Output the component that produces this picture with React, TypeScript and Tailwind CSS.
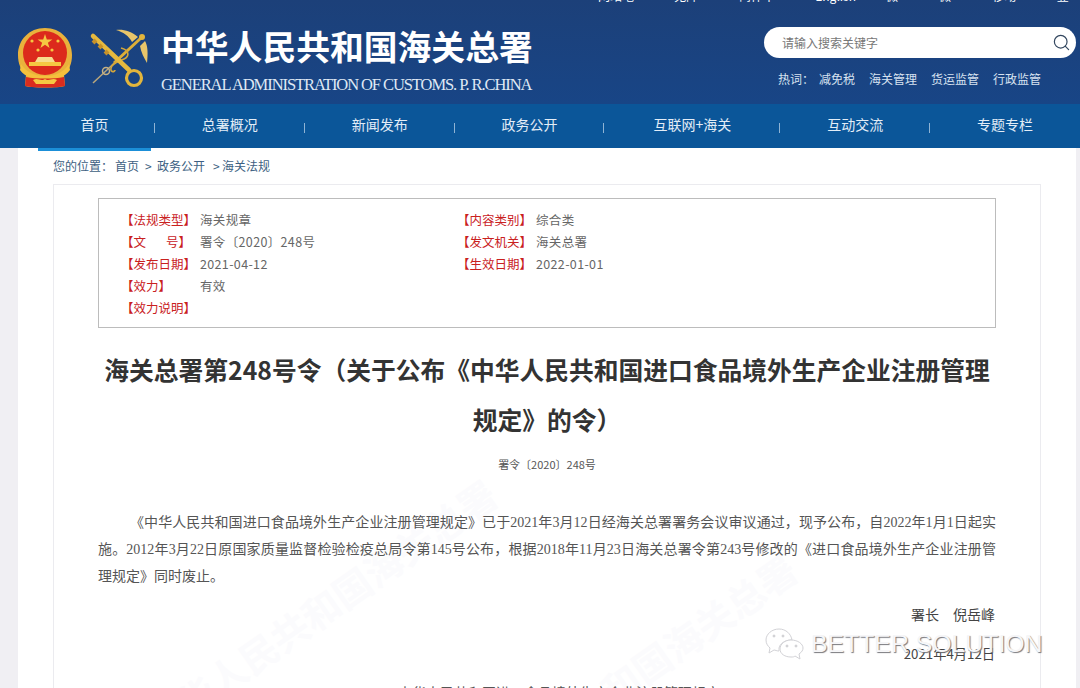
import React from 'react';
import { Search } from 'lucide-react';

const cjk = "font-['Noto_Sans_CJK_SC','Liberation_Sans',sans-serif]";

const navItems = [
  { label: '首页', width: 'w-[117px]', active: true },
  { label: '总署概况', width: 'w-[150px]' },
  { label: '新闻发布', width: 'w-[150px]' },
  { label: '政务公开', width: 'w-[150px]' },
  { label: '互联网+海关', width: 'w-[176px]' },
  { label: '互动交流', width: 'w-[150px]' },
  { label: '专题专栏', width: 'w-[150px]' },
];

const Emblem = () => (
  <svg width="56" height="62" viewBox="0 0 56 62" className="shrink-0">
    <path d="M28 1C12 1 1 13 1 28c0 9 3 15 8 20l-1 11c6 2 34 2 40 0l-1-11c5-5 8-11 8-20C55 13 44 1 28 1z" fill="#e9b23c" />
    <circle cx="28" cy="26" r="22" fill="#dc2a1c" />
    <path d="M28 7l1.8 5.4h5.6l-4.5 3.3 1.7 5.4-4.6-3.3-4.6 3.3 1.7-5.4-4.5-3.3h5.6z" fill="#f5c842" />
    <circle cx="15" cy="14" r="1.6" fill="#f5c842" />
    <circle cx="41" cy="14" r="1.6" fill="#f5c842" />
    <circle cx="21" cy="23" r="1.6" fill="#f5c842" />
    <circle cx="35" cy="23" r="1.6" fill="#f5c842" />
    <path d="M21 30h14l3 5H18z" fill="#f7dd8d" />
    <rect x="12" y="35" width="32" height="4" fill="#f5c842" />
    <path d="M4 37c5 8 13 12 24 12s19-4 24-12l1 6c-5 7-14 10-25 10S8 50 3 43z" fill="#f5c13c" />
    <path d="M9 50c10 2 28 2 38 0l1 9c-10 2-30 2-40 0z" fill="#d92c1e" />
    <path d="M16 53c5-3 8 2 12-1 4 3 7-2 12 1l-3 4H19z" fill="#f5c842" />
  </svg>
);

const CustomsMark = () => (
  <svg width="64" height="62" viewBox="0 0 64 62" className="shrink-0">
    <path d="M56 11L8 56" stroke="#b9a77c" strokeWidth="1.5" />
    <path d="M56 11L29 36" stroke="#dcae38" strokeWidth="3" />
    <circle cx="57" cy="10" r="3" fill="#e2b53c" />
    <path d="M53 10C46 4 38 2 31 3c7 2 13 6 16 12zM60 14c3 5 3 13 2 22-3-5-6-11-7-17z" fill="#e8c56a" />
    <path d="M36 21c8 2 9 8 3 11s-12 4-13 9 4 4 4 2" fill="none" stroke="#d3a63a" strokeWidth="1.6" />
    <circle cx="21" cy="44" r="3.5" fill="none" stroke="#c7b283" strokeWidth="1.5" />
    <path d="M8 9l36 34" stroke="#e6b93e" strokeWidth="4.5" strokeLinecap="round" />
    <path d="M8 16l3-3M14 21l3-3M20 27l3-3" stroke="#c5912a" strokeWidth="4" />
    <circle cx="49" cy="51" r="7.5" fill="none" stroke="#e2b53c" strokeWidth="3.2" />
  </svg>
);

const WeChatMark = () => (
  <svg width="40" height="32" viewBox="0 0 40 32" fill="none" stroke="#d2d2d6" strokeWidth="1">
    <path d="M14 1C7 1 1 6 1 12c0 4 2 6 4 8l-1 5 5-3c1 0 3 1 5 1 0 0 0-1 0-3 1-5 7-8 12-8h1C26 6 21 1 14 1z" fill="#fff" />
    <path d="M26 12c-6 0-11 4-11 9s5 8 11 8c2 0 3 0 4-1l5 3-1-5c3-2 4-4 4-6 0-4-5-8-12-8z" fill="#fff" />
    <circle cx="9" cy="8" r="1" fill="#c8c8cc" />
    <circle cx="18" cy="8" r="1" fill="#c8c8cc" />
    <circle cx="22" cy="18" r="1" fill="#c8c8cc" />
    <circle cx="31" cy="18" r="1" fill="#c8c8cc" />
  </svg>
);

const InfoCell = ({ label, value, width }: { label: React.ReactNode; value?: string; width: string }) => (
  <div className={`flex h-[22px] items-center ${width}`}>
    <span className="w-[79px] shrink-0 pl-[1px] text-[#c9211e]">{label}</span>
    <span className="pl-[1px] tracking-[0.35px] text-[#666]">{value}</span>
  </div>
);

export default function App() {
  return (
    <div className={`relative h-[688px] w-[1080px] overflow-hidden bg-white ${cjk}`}>
      {/* Header */}
      <header className="h-[104px] bg-gradient-to-b from-[#1c4079] to-[#184586]">
        <div className="flex h-[4px] gap-[30px] overflow-hidden pl-[598px] text-[12px] text-white">
          {['网站地图', '无障碍', '简体中文', 'English', '微博', '微信', '移动端', '登录'].map(t => (
            <span key={t} className="mt-[-12px] leading-[16px]">{t}</span>
          ))}
        </div>
        <div className="flex pl-[17px] pt-[23px]">
          <Emblem />
          <div className="ml-[12px]"><CustomsMark /></div>
          <div className="ml-[12px] w-[371px] text-white">
            <div className="mt-[-1px] whitespace-nowrap text-[33.8px] font-bold leading-[40px]">中华人民共和国海关总署</div>
            <div className="mt-[10px] whitespace-nowrap font-['Liberation_Serif',serif] text-[16.5px] leading-[18px] tracking-[-1.08px] text-[#dfe8f4]">
              GENERAL ADMINISTRATION OF CUSTOMS. P. R.CHINA
            </div>
          </div>
          <div className="ml-[232px] w-[312px]">
            <div className="flex h-[31px] items-center justify-between rounded-full bg-white pl-[18px] pr-[5px] text-[12px] text-[#777]">
              <span>请输入搜索关键字</span>
              <Search size={19} strokeWidth={1.5} className="text-[#33475f]" />
            </div>
            <div className="mt-[12px] flex pl-[14px] text-[12px] leading-[18px] text-[#d7e2f0]">
              <span className="w-[41px]">热词：</span>
              <span className="w-[50px]">减免税</span>
              <span className="w-[62px]">海关管理</span>
              <span className="w-[62px]">货运监管</span>
              <span>行政监管</span>
            </div>
          </div>
        </div>
      </header>

      {/* Nav */}
      <nav className="flex h-[44px] bg-[#0b5699] pl-[38px] text-[14px] text-[#e3edf7]">
        {navItems.map((item, i) => (
          <div key={item.label} className={`relative flex h-full items-center justify-center pb-[4px] ${item.width}`}>
            <span className={item.active ? 'mr-[4px]' : ''}>{item.label}</span>
            {item.active && <div className="absolute bottom-[-3px] left-0 h-[3px] w-[113px] bg-[#1b8fd8]" />}
            {i < navItems.length - 1 && <div className="absolute right-0 top-[19px] h-[10px] w-px bg-[#8fb3d4]" />}
          </div>
        ))}
      </nav>

      {/* Breadcrumb */}
      <div className="flex h-[36px] items-center pl-[53px] text-[12px] text-[#3d5f82]">
        <span className="w-[62px]">您的位置：</span>
        <span className="w-[30px]">首页</span>
        <span className="w-[12px]">&gt;</span>
        <span className="w-[56px]">政务公开</span>
        <span className="w-[9px]">&gt;</span>
        <span>海关法规</span>
      </div>

      {/* Article card */}
      <main className="relative z-10 ml-[53px] w-[988px] border border-[#ebebef] px-[44px] pt-[13px]">
        <section className="h-[130px] border border-[#bcbcbc] pl-[21px] pt-[10px] text-[12.5px]">
          <div className="flex"><InfoCell width="w-[336px]" label="【法规类型】" value="海关规章" /><InfoCell width="w-[300px]" label="【内容类别】" value="综合类" /></div>
          <div className="flex">
            <InfoCell width="w-[336px]" label={<span className="inline-flex w-[70px] justify-between"><span>【文</span><span>号】</span></span>} value="署令〔2020〕248号" />
            <InfoCell width="w-[300px]" label="【发文机关】" value="海关总署" />
          </div>
          <div className="flex"><InfoCell width="w-[336px]" label="【发布日期】" value="2021-04-12" /><InfoCell width="w-[300px]" label="【生效日期】" value="2022-01-01" /></div>
          <InfoCell width="w-[336px]" label="【效力】" value="有效" />
          <InfoCell width="w-[336px]" label="【效力说明】" />
        </section>

        <h1 className="mt-[16px] text-center text-[24.75px] font-bold leading-[50px] text-[#333]">
          海关总署第248号令（关于公布《中华人民共和国进口食品境外生产企业注册管理规定》的令）
        </h1>
        <p className="mt-[12px] text-center text-[11px] leading-[16px] text-[#555]">署令〔2020〕248号</p>

        <div className="mt-[37px] font-['Liberation_Serif','Noto_Sans_CJK_SC',serif] text-[14px] leading-[27px] text-[#555]">
          <p className="text-justify indent-[32px]">
            《中华人民共和国进口食品境外生产企业注册管理规定》已于2021年3月12日经海关总署署务会议审议通过，现予公布，自2022年1月1日起实施。2012年3月22日原国家质量监督检验检疫总局令第145号公布，根据2018年11月23日海关总署令第243号修改的《进口食品境外生产企业注册管理规定》同时废止。
          </p>
        </div>
        <div className="mt-[11px] pr-[1px] text-right text-[14px] leading-[26px] text-[#444]">署长　倪岳峰</div>
        <div className="mt-[14px] pr-[1px] text-right text-[13.25px] leading-[26px] text-[#444]">2021年4月12日</div>
        <p className="mt-[12px] pl-[24px] text-center text-[14px] leading-[27px] text-[#555]">中华人民共和国进口食品境外生产企业注册管理规定</p>
      </main>

      {/* Faint page watermark */}
      <div className="pointer-events-none absolute left-[111px] top-[580px] -rotate-[35deg] whitespace-nowrap text-[38px] font-bold text-[#fbfbfd]">中华人民共和国海关总署</div>
      <div className="pointer-events-none absolute left-[411px] top-[655px] -rotate-[35deg] whitespace-nowrap text-[38px] font-bold text-[#fbfbfd]">中华人民共和国海关总署</div>

      {/* Window edge strips */}
      <div className="absolute bottom-0 left-0 top-[148px] w-[18px] bg-[#f0eff3]" />
      <div className="absolute bottom-0 right-0 top-[148px] w-[4px] bg-[#f0eff3]" />

      {/* WeChat overlay */}
      <div className="absolute left-[765px] top-[628px] z-20 flex items-center gap-[6px]">
        <WeChatMark />
        <span className="whitespace-nowrap font-['Liberation_Sans',sans-serif] text-[24.8px] font-normal leading-[32px] text-[#f6f6f8] [text-shadow:1px_1px_1px_#77777c]">BETTER SOLUTION</span>
      </div>
    </div>
  );
}
